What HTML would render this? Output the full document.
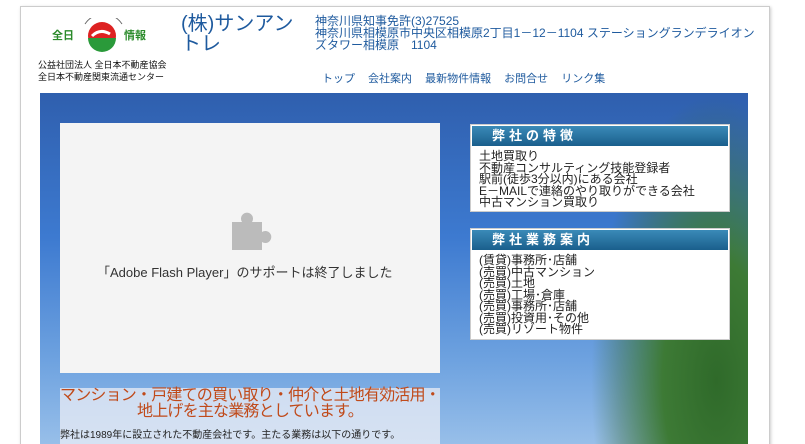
<!DOCTYPE html>
<html><head><meta charset="utf-8"><style>
html,body{margin:0;width:805px;height:444px;overflow:hidden;background:#fff;font-family:"Liberation Sans","Noto Sans CJK JP",sans-serif;position:relative}
.outer{position:absolute;left:20px;top:6px;width:748px;height:460px;border:1px solid #ccc;box-shadow:1px 1px 3px #ccc;background:#fff}
.a{position:absolute}
.photo{left:40px;top:93px;width:708px;height:360px;background:linear-gradient(180deg,#2f5fae 0%,#3d7ad0 40%,#6fa3e0 75%,#9cc2ea 100%)}
.tree{left:590px;top:93px;width:158px;height:360px;background:radial-gradient(ellipse at 80% 80%,#2f6a2a 0%,#3d7a35 30%,rgba(60,110,60,.4) 55%,transparent 70%)}
.flash{left:60px;top:123px;width:380px;height:250px;background:#f4f4f4;color:#333;font-size:13px}
.box{left:470px;width:258px;background:#fff;border:1px solid #ccc;font-size:12px;line-height:11.5px;color:#222}
.hd{height:20px;background:linear-gradient(#3a8ab8,#1a5f8c);color:#fff;font-weight:bold;font-size:13px;line-height:20px;padding-left:20px;letter-spacing:4px;margin:1px}
.nav{top:70px;left:322px;font-size:11px;color:#1e5a9e;word-spacing:10px}
</style></head><body>
<div class="outer"></div>
<div class="a" style="left:52px;top:18px;width:100px;height:42px">
<svg width="100" height="42"><path d="M33 6 A22 22 0 0 1 70 6" fill="none" stroke="#666" stroke-width="1"/><circle cx="50" cy="18" r="14" fill="#d22"/><path d="M36 20 A14 14 0 0 0 64 20 Z" fill="#2a9a3a"/><path d="M40 18 q8 -8 18 -2" stroke="#fff" stroke-width="3" fill="none"/><text x="0" y="21" font-size="11" font-weight="bold" fill="#2a8a2a" font-family="Noto Sans CJK JP">全日</text><text x="72" y="21" font-size="11" font-weight="bold" fill="#2a8a2a" font-family="Noto Sans CJK JP">情報</text></svg></div>
<div class="a" style="left:38px;top:59px;font-size:9px;line-height:12px;color:#111">公益社団法人 全日本不動産協会<br>全日本不動産関東流通センター</div>
<div class="a" style="left:181px;top:14px;font-size:20px;line-height:20px;color:#1e5a9e;width:120px">(株)サンアントレ</div>
<div class="a" style="left:315px;top:15px;font-size:12px;line-height:12px;color:#1e5a9e;width:440px">神奈川県知事免許(3)27525<br>神奈川県相模原市中央区相模原2丁目1－12－1104 ステーショングランデライオンズタワー相模原　1104</div>
<div class="a nav">トップ 会社案内 最新物件情報 お問合せ リンク集</div>
<div class="a photo"></div>
<div class="a tree"></div>
<div class="a flash"><svg class="a" style="left:168px;top:85px" width="44" height="44"><path d="M4 14h10a6 6 0 1 1 10 0h10v10a6 6 0 1 1 0 10v8H4z" fill="#bbb"/></svg><div class="a" style="left:37px;top:139px">「Adobe Flash Player」のサポートは終了しました</div></div>
<div class="a box" style="top:124px;height:86px"><div class="hd">弊社の特徴</div><div style="padding:4px 8px">土地買取り<br>不動産コンサルティング技能登録者<br>駅前(徒歩3分以内)にある会社<br>E－MAILで連絡のやり取りができる会社<br>中古マンション買取り</div></div>
<div class="a box" style="top:228px;height:110px"><div class="hd">弊社業務案内</div><div style="padding:4px 8px">(賃貸)事務所･店舗<br>(売買)中古マンション<br>(売買)土地<br>(売買)工場･倉庫<br>(売買)事務所･店舗<br>(売買)投資用･その他<br>(売買)リゾート物件</div></div>
<div class="a" style="left:60px;top:388px;width:380px;height:60px;background:rgba(235,238,245,.75);color:#c04a1a;font-size:16px;line-height:16px;text-align:center;letter-spacing:-0.8px">マンション・戸建ての買い取り・仲介と土地有効活用・地上げを主な業務としています。<div style="color:#222;font-size:10px;text-align:left;margin-top:8px;letter-spacing:0">弊社は1989年に設立された不動産会社です。主たる業務は以下の通りです。</div></div>
</body></html>
